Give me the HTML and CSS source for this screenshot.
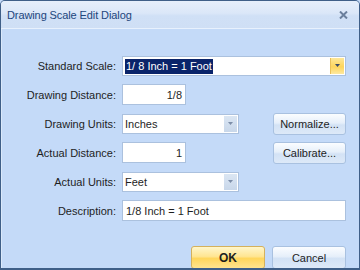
FILE: index.html
```html
<!DOCTYPE html>
<html>
<head>
<meta charset="utf-8">
<link rel="stylesheet" href="styles.css">
</head>
<body>
<div class="window">
  <div class="titlebar">
    <span class="title">Drawing Scale Edit Dialog</span>
    <svg class="close" width="9" height="8" viewBox="0 0 9 8"><path d="M1 0.5 L8 7.5 M8 0.5 L1 7.5" stroke="#6b7f9c" stroke-width="2"/></svg>
  </div>
  <div class="content">
    <div class="form">
      <label class="lbl">Standard Scale:</label>
      <div class="combo wide">
        <span class="combo-text"><span class="sel">1/ 8 Inch = 1 Foot</span></span>
        <span class="drop hot"><svg width="5" height="3" viewBox="0 0 5 3"><path d="M0 0 H5 L2.5 3 Z" fill="#3a4a66"/></svg></span>
      </div>

      <label class="lbl">Drawing Distance:</label>
      <div class="input short right">1/8</div>

      <label class="lbl">Drawing Units:</label>
      <div class="combo mid">
        <span class="combo-text">Inches</span>
        <span class="drop"><svg width="5" height="3" viewBox="0 0 5 3"><path d="M0 0 H5 L2.5 3 Z" fill="#7d8ea8"/></svg></span>
      </div>
      <button class="btn side">Normalize...</button>

      <label class="lbl">Actual Distance:</label>
      <div class="input short right">1</div>
      <button class="btn side">Calibrate...</button>

      <label class="lbl">Actual Units:</label>
      <div class="combo mid">
        <span class="combo-text">Feet</span>
        <span class="drop"><svg width="5" height="3" viewBox="0 0 5 3"><path d="M0 0 H5 L2.5 3 Z" fill="#7d8ea8"/></svg></span>
      </div>

      <label class="lbl">Description:</label>
      <div class="input wide">1/8 Inch = 1 Foot</div>
    </div>
    <div class="actions">
      <button class="btn ok">OK</button>
      <button class="btn">Cancel</button>
    </div>
  </div>
</div>
</body>
</html>
```

FILE: styles.css
```css
html, body {
  margin: 0;
  padding: 0;
}
body {
  width: 360px;
  height: 270px;
  overflow: hidden;
  font-family: "Liberation Sans", Arial, sans-serif;
  font-size: 11px;
  color: #1e1e1e;
  background: #c4daf8;
}
.window {
  box-sizing: border-box;
  width: 360px;
  height: 270px;
  border: 1px solid #3f5f88;
  border-bottom-width: 2px;
  border-radius: 5px 5px 0 0;
  display: flex;
  flex-direction: column;
  overflow: hidden;
  background: #c4daf8;
}
.titlebar {
  height: 26px;
  flex: none;
  display: flex;
  align-items: center;
  justify-content: space-between;
  padding: 1px 11px 0 6px;
  background: linear-gradient(#e6effb 0%, #dbe7f8 45%, #d0e0f6 55%, #cfdff5 100%);
  border-bottom: 1px solid #e8f1fd;
}
.title {
  color: #22467c;
  font-size: 11px;
  letter-spacing: -0.1px;
}
.close {
  display: block;
}
.content {
  flex: 1;
  display: flex;
  flex-direction: column;
  justify-content: space-between;
  padding: 26px 13px 0 0;
  border-left: 1px solid #dbe9fb;
}
.form {
  display: grid;
  grid-template-columns: 114px 117px 1fr 73px;
  grid-auto-rows: 21px;
  column-gap: 6px;
  row-gap: 8px;
  align-items: center;
}
.lbl {
  grid-column: 1;
  text-align: right;
  white-space: nowrap;
  color: #1e1e1e;
}
.input, .combo {
  box-sizing: border-box;
  height: 20px;
  background: #fff;
  border: 1px solid #abc1de;
  display: flex;
  align-items: center;
  white-space: nowrap;
}
.input {
  padding: 0 3px;
  height: 21px;
}
.input.right {
  justify-content: flex-end;
}
.short {
  grid-column: 2;
  width: 64px;
}
.wide {
  grid-column: 2 / 5;
}
.mid {
  grid-column: 2;
}
.combo-text {
  flex: 1;
  padding-left: 2px;
}
.sel {
  background: #0a246a;
  color: #fff;
  padding: 1px 1px 2px 1px;
}
.drop {
  width: 13px;
  align-self: stretch;
  margin: 1px;
  display: flex;
  align-items: center;
  justify-content: center;
  background: linear-gradient(#dbe6f3, #c8d7ea);
}
.drop.hot {
  background: linear-gradient(#fde79a, #fdd55c 55%, #fde8a0);
  border-left: 1px solid #e9c05a;
}
.btn {
  box-sizing: border-box;
  height: 22px;
  font-family: "Liberation Sans", Arial, sans-serif;
  font-size: 11px;
  color: #1e1e1e;
  border: 1px solid #a9c1e0;
  border-radius: 3px;
  background: linear-gradient(#fbfdff 0%, #e6effa 45%, #d3e2f5 55%, #dde9f8 100%);
  padding: 0;
}
.side {
  grid-column: 4;
}
.actions {
  display: flex;
  justify-content: flex-end;
  gap: 7px;
  margin-bottom: -1px;
}
.actions .btn {
  width: 74px;
  height: 23px;
}
.btn.ok {
  font-weight: bold;
  font-size: 12px;
  border-color: #d5b15c;
  background: linear-gradient(#fff6cb 0%, #ffe592 45%, #ffd65c 55%, #ffe48f 100%);
}
```
